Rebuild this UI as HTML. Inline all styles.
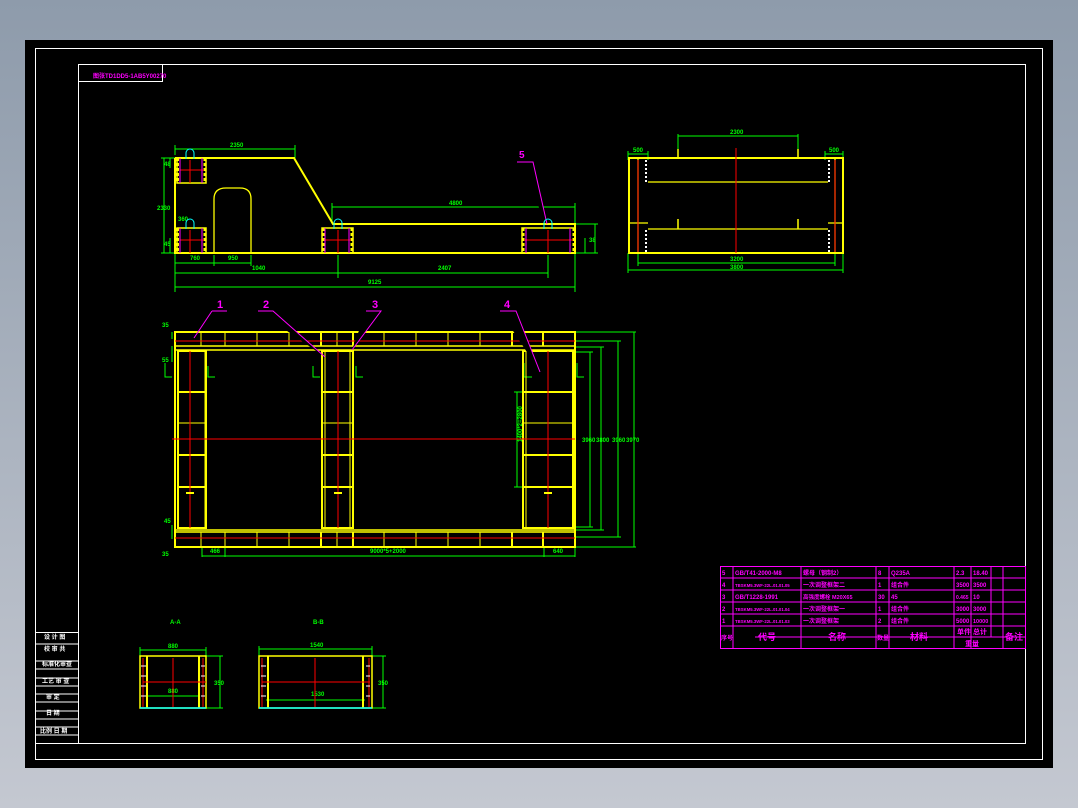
<!DOCTYPE html>
<html><head><meta charset="utf-8"><style>
html,body{margin:0;padding:0;width:1078px;height:808px;overflow:hidden;background:linear-gradient(#8e9bab,#c4c8d1);}
svg{display:block}
text{font-family:"Liberation Sans","Noto Sans CJK SC",sans-serif;font-weight:bold}
</style></head><body>
<svg width="1078" height="808" viewBox="0 0 1078 808" xmlns="http://www.w3.org/2000/svg">
<rect x="25" y="40" width="1028" height="728" fill="#000"/>
<g fill="none" stroke="#fff" stroke-width="1">
<rect x="35.5" y="48.5" width="1007" height="711"/>
<rect x="78.5" y="64.5" width="947" height="679"/>
<rect x="78.5" y="64.5" width="84" height="17"/>
<rect x="35.5" y="632.5" width="43" height="111"/>
<path d="M35 644H78M35 661H78M35 669H78M35 678H78M35 686H78M35 694H78M35 702H78M35 711H78M35 719H78M35 727H78M35 735H78"/>
</g>
<text x="93" y="78" fill="#f0f" font-size="6">图张TD1DD5-1AB5Y00270</text>
<g fill="#fff" font-size="6">
<text x="44" y="639">设 计 图</text><text x="44" y="651">校 审 共</text><text x="42" y="666">标准化审查</text>
<text x="42" y="683">工艺 审 查</text><text x="46" y="699">审 定</text><text x="46" y="715">日 期</text><text x="40" y="733">比例 日 期</text>
</g>

<!-- Elevation view -->
<g fill="none" stroke="#0f0" stroke-width="1">
<path d="M175 149H295M175 145V155M295 145V160"/>
<path d="M161 158H176M161 253H176M164 158V253M170 158V168M170 238V253"/>
<path d="M332 207H575M332 203V224M575 203V224"/>
<path d="M575 224H598M575 253H598M595 224V253M585 238V253"/>
<path d="M175 263H251M175 260V270M214 255V266M251 255V266"/>
<path d="M175 273H548M338 255V278M548 255V278"/>
<path d="M175 287H575M175 253V292M575 253V292"/>
</g>
<g fill="#0f0" font-size="6">
<text x="230" y="147">2350</text><text x="157" y="210">2330</text><text x="449" y="205">4800</text>
<text x="190" y="260">760</text><text x="228" y="260">950</text><text x="252" y="270">1040</text><text x="438" y="270">2407</text><text x="368" y="284">9125</text>
<text x="178" y="221">360</text><text x="589" y="242">38</text><text x="164" y="246">45</text><text x="164" y="166">48</text>
</g>
<g fill="none" stroke="#ff0" stroke-width="2">
<path d="M175 158H294L333 224H575V253H175V158"/>
<path d="M214 253V199Q214 188 226 188H240Q251 188 251 199V253" stroke-width="1.3"/>
<rect x="177" y="158" width="29" height="25" stroke-width="1.5"/>
<rect x="177" y="228" width="29" height="25" stroke-width="1.5"/>
<rect x="322" y="228" width="31" height="25" stroke-width="1.5"/>
<rect x="522" y="228" width="53" height="25" stroke-width="1.5"/>
<path d="M177.5 158V183M205 158V183M177.5 228V253M205 228V253M323 228V253M352 228V253M523 228V253M574 228V253" stroke-width="3" stroke-dasharray="3 2"/>
</g>
<g stroke="#f00" stroke-width="1">
<path d="M180 170H204M190 160V183M180 240H204M190 230V253M324 240H351M338 230V253M524 240H573M548 230V253"/>
</g>
<g stroke="#f0f" stroke-width="1">
<path d="M180 158V183M202 158V183M180 228V253M202 228V253M325 228V253M349 228V253M526 228V253M570 228V253"/>
<path d="M517 162H533L547 224"/>
</g>
<text x="519" y="158" fill="#f0f" font-size="10" font-family="Liberation Serif">5</text>
<g fill="none" stroke="#0ff" stroke-width="1">
<path d="M186 159V153A4 4 0 0 1 194 153V159M186 229V223A4 4 0 0 1 194 223V229M334 229V223A4 4 0 0 1 342 223V229M544 229V223A4 4 0 0 1 552 223V229"/>
</g>

<!-- Side view -->
<g fill="none" stroke="#0f0" stroke-width="1">
<path d="M678 136H798M678 134V158M798 134V158"/>
<path d="M628 154H648M628 151V160M648 151V160M825 154H843M825 151V160M843 151V160"/>
<path d="M638 263H835M638 253V266M835 253V266M628 270H843M628 253V273M843 253V273"/>
</g>
<g fill="#0f0" font-size="6"><text x="730" y="134">2300</text><text x="633" y="152">500</text><text x="829" y="152">500</text><text x="730" y="261">3200</text><text x="730" y="269">3800</text></g>
<g fill="none" stroke="#ff0" stroke-width="2">
<rect x="629" y="158" width="214" height="95"/>
<path d="M638 158V253M835 158V253M648 182H828M648 229H828M629 223H648M828 223H843" stroke-width="1.3"/>
<path d="M678 149V158M798 149V158M678 219V229M798 219V229" stroke-width="1.5"/>
</g>
<path d="M646 160V182M646 230V252M829 160V182M829 230V252" stroke="#fff" stroke-width="2" stroke-dasharray="2 2"/>
<g stroke="#f00"><path d="M736 148V253M638 160V252M835 160V252"/></g>

<!-- Plan view -->
<g fill="none" stroke="#0f0" stroke-width="1">
<path d="M575 332H636M575 341H621M575 347H604M575 352H593M575 527H593M575 530H604M575 537H621M575 547H636"/>
<path d="M634 332V547M618 341V537M601 347V530M590 352V527"/>
<path d="M517 392V487M514 392H523M514 487H523"/>
<path d="M172 332V339M172 346V362M172 525V539M202 547V557M225 547V557M544 547V557M575 547V557M202 556H575"/>
<path d="M165 363V377H172M208 366V377H215M313 366V377H320M356 366V377H363M524 363V377H532M577 363V377H584"/>
</g>
<g fill="#0f0" font-size="6">
<text x="210" y="553">466</text><text x="370" y="553">9000*5+2000</text><text x="553" y="553">640</text>
<text x="582" y="442">3960</text><text x="596" y="442">3800</text><text x="612" y="442">3960</text><text x="626" y="442">3970</text>
<text x="510" y="450" transform="rotate(-90 512 440)">1400*2=2800</text>
<text x="162" y="327">35</text><text x="162" y="362">55</text><text x="164" y="523">45</text><text x="162" y="556">35</text>
</g>
<g fill="none" stroke="#ff0">
<rect x="175" y="332" width="400" height="215" stroke-width="2"/>
<path d="M175 346H575M175 350H575M175 530H575M175 532H575" stroke-width="1.5"/>
<path d="M201 333V346M225 333V346M257 333V346M289 333V346M321 333V346M337 333V346M353 333V346M384 333V346M416 333V346M448 333V346M480 333V346M512 333V346M543 333V346M201 532V547M225 532V547M257 532V547M289 532V547M321 532V547M337 532V547M353 532V547M384 532V547M416 532V547M448 532V547M480 532V547M512 532V547M543 532V547" stroke-width="1"/>
<path d="M321 333V346M353 333V346M512 333V346M543 333V346M321 532V547M353 532V547M512 532V547M543 532V547" stroke-width="2"/>
<rect x="178" y="351" width="28" height="177" stroke-width="2"/>
<rect x="322" y="351" width="31" height="177" stroke-width="2"/>
<rect x="523" y="351" width="50" height="177" stroke-width="2"/>
<path d="M205 351V528M526 351V528M325 351V528M350 351V528" stroke-width="1"/>
<path d="M179 392H205M179 455H205M179 487H205M323 392H352M323 455H352M323 487H352M524 392H572M524 455H572M524 487H572" stroke-width="2"/>
<path d="M179 423H205M323 423H352M524 423H572" stroke-width="1"/>
</g>
<g stroke="#f00" stroke-width="1"><path d="M175 341H575M175 538H575M172 439H575M190 351V528M338 351V528M548 351V528"/></g>
<g stroke="#ff0" stroke-width="2"><path d="M186 493H194M334 493H342M544 493H552"/></g>
<g stroke="#f0f" stroke-width="1">
<path d="M212 311H227M212 311L194 338M258 311H273L325 357M366 311H381L352 350M500 311H516L540 372"/>
</g>
<g fill="#f0f" font-size="11" font-family="Liberation Serif"><text x="217" y="308">1</text><text x="263" y="308">2</text><text x="372" y="308">3</text><text x="504" y="308">4</text></g>

<!-- Bottom small views -->
<g fill="#0f0" font-size="6"><text x="170" y="624">A-A</text><text x="313" y="624">B-B</text><text x="168" y="648">880</text><text x="310" y="647">1540</text><text x="168" y="693">880</text><text x="311" y="696">1530</text><text x="214" y="685">350</text><text x="378" y="685">350</text></g>
<g fill="none" stroke="#0f0" stroke-width="1">
<path d="M140 650H206M140 647V656M206 647V656M206 656H223M206 708H223M220 656V708"/>
<path d="M259 649H372M259 646V656M372 646V656M372 656H386M372 708H386M383 656V708"/>
<path d="M147 696H198M266 700H365"/>
</g>
<g fill="none" stroke="#ff0" stroke-width="1.5">
<rect x="140" y="656" width="66" height="52"/><path d="M147 656V708M199 656V708" stroke-width="2"/>
<rect x="259" y="656" width="113" height="52"/><path d="M268 656V708M363 656V708" stroke-width="2"/>
</g>
<path d="M140 708H206M259 708H372" stroke="#0ff" stroke-width="1.5"/>
<g stroke="#f00" stroke-width="1"><path d="M143 682H206M173 658V707M143 658V707M203 658V707M262 682H370M315 658V707M262 658V707M369 658V707"/></g>
<g stroke="#fff" stroke-width="1"><path d="M141 666H146M141 676H146M141 686H146M141 696H146M201 666H205M201 676H205M201 686H205M201 696H205M261 666H266M261 676H266M261 686H266M261 696H266M366 666H370M366 676H370M366 686H370M366 696H370"/></g>

<!-- Parts table -->
<g fill="none" stroke="#f0f" stroke-width="1">
<rect x="720.5" y="566.5" width="305" height="82"/>
<path d="M720 578H1025M720 590H1025M720 602H1025M720 614H1025M720 626H1025M755 637H1025"/>
<path d="M733 566V648M801 566V648M876 566V648M889 566V648M954 566V648M971 566V648M991 566V637M1003 566V648"/>
</g>
<g fill="#f0f" font-size="6">
<text x="722" y="575">5</text><text x="735" y="575">GB/T41-2000-M8</text><text x="803" y="575">螺母（钢制2）</text><text x="878" y="575">8</text><text x="891" y="575">Q235A</text><text x="956" y="575">2.3</text><text x="973" y="575">18.40</text>
<text x="722" y="587">4</text><text x="735" y="587" font-size="4.3">TBSKM5.3WF-22L.01.01.05</text><text x="803" y="587">一次调整框架二</text><text x="878" y="587">1</text><text x="891" y="587">组合件</text><text x="956" y="587">3500</text><text x="973" y="587">3500</text>
<text x="722" y="599">3</text><text x="735" y="599">GB/T1228-1991</text><text x="803" y="599" font-size="5.5">高强度螺栓 M20X65</text><text x="878" y="599">30</text><text x="891" y="599">45</text><text x="956" y="599" font-size="5">0.465</text><text x="973" y="599">10</text>
<text x="722" y="611">2</text><text x="735" y="611" font-size="4.3">TBSKM5.3WF-22L.01.01.04</text><text x="803" y="611">一次调整框架一</text><text x="878" y="611">1</text><text x="891" y="611">组合件</text><text x="956" y="611">3000</text><text x="973" y="611">3000</text>
<text x="722" y="623">1</text><text x="735" y="623" font-size="4.3">TBSKM5.3WF-22L.01.01.03</text><text x="803" y="623">一次调整框架</text><text x="878" y="623">2</text><text x="891" y="623">组合件</text><text x="956" y="623">5000</text><text x="973" y="623" font-size="5.5">10000</text>
</g>
<g fill="#f0f" font-size="9">
<text x="721" y="640" font-size="6">序号</text><text x="758" y="640">代号</text><text x="828" y="640">名称</text><text x="877" y="640" font-size="6">数量</text><text x="910" y="640">材料</text><text x="957" y="634" font-size="7">单件</text><text x="973" y="634" font-size="7">总计</text><text x="965" y="646" font-size="7">重量</text><text x="1005" y="640">备注</text>
</g>
</svg>
</body></html>
